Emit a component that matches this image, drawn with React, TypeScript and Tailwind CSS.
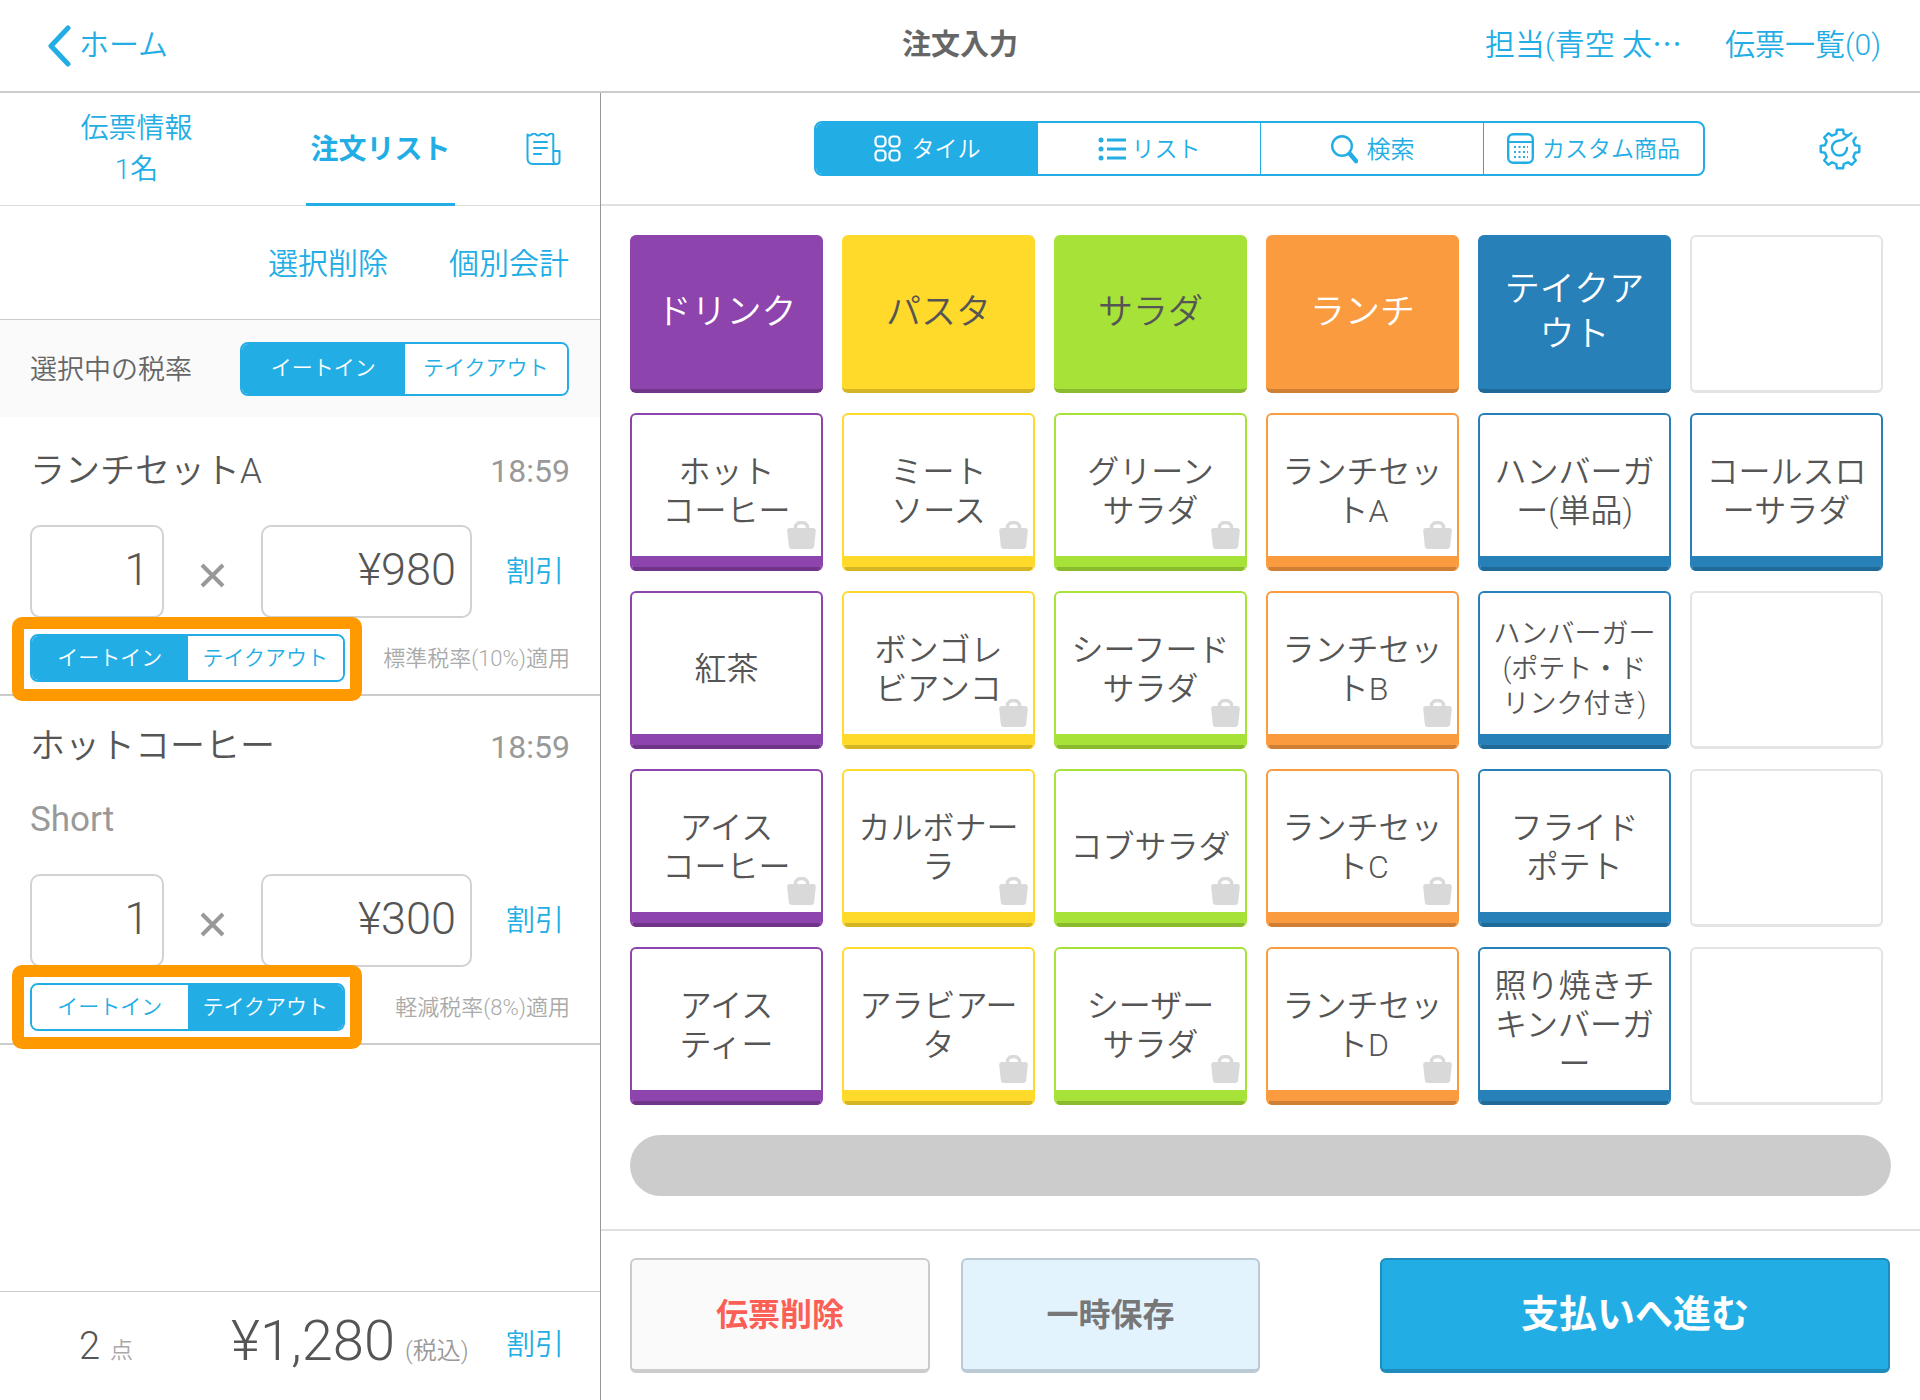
const palette = {
  purple: { solid: 'bg-[#8e44ad] border-b-[#703589] text-white', border: 'border-[#8e44ad]', band: 'bg-[#8e44ad] border-b-[#703589]' },
  yellow: { solid: 'bg-[#ffda2b] border-b-[#d6b525] text-[#555555]', border: 'border-[#ffda2b]', band: 'bg-[#ffda2b] border-b-[#d6b525]' },
  green: { solid: 'bg-[#a6e238] border-b-[#8abb2f] text-[#555555]', border: 'border-[#a6e238]', band: 'bg-[#a6e238] border-b-[#8abb2f]' },
  orange: { solid: 'bg-[#fb9b3f] border-b-[#d08035] text-white', border: 'border-[#fb9b3f]', band: 'bg-[#fb9b3f] border-b-[#d08035]' },
  blue: { solid: 'bg-[#2880b9] border-b-[#206a9a] text-white', border: 'border-[#2880b9]', band: 'bg-[#2880b9] border-b-[#206a9a]' },
}

type Color = keyof typeof palette

interface Tile {
  label?: string
  color?: Color
  bag?: boolean
  small?: boolean
  solid?: boolean
}

const tiles: Tile[] = [
  { label: 'ドリンク', color: 'purple', solid: true },
  { label: 'パスタ', color: 'yellow', solid: true },
  { label: 'サラダ', color: 'green', solid: true },
  { label: 'ランチ', color: 'orange', solid: true },
  { label: 'テイクア\nウト', color: 'blue', solid: true },
  {},
  { label: 'ホット\nコーヒー', color: 'purple', bag: true },
  { label: 'ミート\nソース', color: 'yellow', bag: true },
  { label: 'グリーン\nサラダ', color: 'green', bag: true },
  { label: 'ランチセッ\nトA', color: 'orange', bag: true },
  { label: 'ハンバーガ\nー(単品)', color: 'blue' },
  { label: 'コールスロ\nーサラダ', color: 'blue' },
  { label: '紅茶', color: 'purple' },
  { label: 'ボンゴレ\nビアンコ', color: 'yellow', bag: true },
  { label: 'シーフード\nサラダ', color: 'green', bag: true },
  { label: 'ランチセッ\nトB', color: 'orange', bag: true },
  { label: 'ハンバーガー\n(ポテト・ド\nリンク付き)', color: 'blue', small: true },
  {},
  { label: 'アイス\nコーヒー', color: 'purple', bag: true },
  { label: 'カルボナー\nラ', color: 'yellow', bag: true },
  { label: 'コブサラダ', color: 'green', bag: true },
  { label: 'ランチセッ\nトC', color: 'orange', bag: true },
  { label: 'フライド\nポテト', color: 'blue' },
  {},
  { label: 'アイス\nティー', color: 'purple' },
  { label: 'アラビアー\nタ', color: 'yellow', bag: true },
  { label: 'シーザー\nサラダ', color: 'green', bag: true },
  { label: 'ランチセッ\nトD', color: 'orange', bag: true },
  { label: '照り焼きチ\nキンバーガ\nー', color: 'blue' },
  {},
]

// outline of the cog, open at the upper right tooth
function cogPath() {
  const pt = (r: number, deg: number) => {
    const a = (deg * Math.PI) / 180
    return `${(22 + r * Math.cos(a)).toFixed(1)} ${(22 + r * Math.sin(a)).toFixed(1)}`
  }
  const parts: string[] = [`M${pt(19.5, -36)}`, `L${pt(15.5, -31)}`]
  for (let i = 1; i < 8; i++) {
    const a = -45 + i * 45
    parts.push(`L${pt(15.5, a - 14)}`, `L${pt(19.5, a - 9)}`, `L${pt(19.5, a + 9)}`, `L${pt(15.5, a + 14)}`)
  }
  parts.push(`L${pt(15.5, -59)}`, `L${pt(19.5, -54)}`)
  return parts.join(' ')
}

function CogIcon() {
  return (
    <svg width="44" height="44" viewBox="0 0 44 44" fill="none" stroke="#22aee5" strokeWidth="2.400" strokeLinecap="round" strokeLinejoin="round" className="ml-[113px]">
      <path d={cogPath()} />
      <path d="M29 21a7.500 7.500 0 1 1-7.500-7.500c3 0 6-2.500 8-4.500" />
    </svg>
  )
}

function BagIcon() {
  return (
    <svg width="29" height="28" viewBox="0 0 29 28" className="absolute right-[5px] bottom-[22px]">
      <path d="M8.500 9V6a6 4.500 0 0 1 12 0v3" fill="none" stroke="#d9d9d9" strokeWidth="3.500" />
      <path d="M3 7h23q3 0 2.800 3l-1.600 15q-.3 3-3.200 3H5q-2.900 0-3.200-3L.2 10Q0 7 3 7z" fill="#d9d9d9" />
    </svg>
  )
}

function TileCell({ tile }: { tile: Tile }) {
  if (!tile.color) {
    return <div className="h-[158px] rounded-[6px] border-2 border-b-[3px] border-[#e4e4e4] bg-white" />
  }
  const colors = palette[tile.color]
  if (tile.solid) {
    return (
      <div className={`flex h-[158px] items-center justify-center rounded-[6px] border-b-4 text-center text-[35px] leading-[45px] font-[350] whitespace-pre-line ${colors.solid}`}>
        {tile.label}
      </div>
    )
  }
  return (
    <div className={`relative flex h-[158px] flex-col overflow-hidden rounded-[6px] border-x-2 border-t-2 bg-white ${colors.border}`}>
      <div className={`flex flex-1 items-center justify-center pt-[12px] text-center font-[350] whitespace-pre-line text-[#555555] ${tile.small ? 'text-[27px] leading-[35px]' : 'text-[32px] leading-[39px]'}`}>
        {tile.label}
      </div>
      <div className={`h-[15px] border-b-4 ${colors.band}`} />
      {tile.bag && <BagIcon />}
    </div>
  )
}

function TaxToggle({ active, className }: { active: 'eat' | 'take'; className: string }) {
  return (
    <div className={`flex overflow-hidden rounded-[8px] border-2 border-[#22aee5] text-[21px] font-[350] ${className}`}>
      <div className={`flex w-1/2 flex-none items-center justify-center pt-[1px] ${active === 'eat' ? 'bg-[#22aee5] text-white' : 'bg-white text-[#22aee5]'}`}>イートイン</div>
      <div className={`flex w-1/2 flex-none items-center justify-center pt-[1px] ${active === 'take' ? 'bg-[#22aee5] text-white' : 'bg-white text-[#22aee5]'}`}>テイクアウト</div>
    </div>
  )
}

function OrderLine({ price, active, note, frameClass }: { price: string; active: 'eat' | 'take'; note: string; frameClass: string }) {
  return (
    <>
      <div className="flex h-[93px] items-start">
        <div className="flex h-[93px] w-[134px] items-start justify-end rounded-[10px] border-2 border-[#d2d2d2] pt-[19px] pr-[13px] text-[44px] leading-[48px] font-light text-[#555555]">1</div>
        <svg width="25" height="25" viewBox="0 0 25 25" className="mt-[38px] ml-[36px]">
          <path d="M2 2l21 21M23 2L2 23" stroke="#999999" strokeWidth="4" />
        </svg>
        <div className="ml-[36px] flex h-[93px] w-[211px] items-start justify-end rounded-[10px] border-2 border-[#d2d2d2] pt-[19px] pr-[14px] text-[45px] leading-[48px] font-light text-[#555555]">{price}</div>
        <div className="mt-[27px] ml-[34px] text-[29px] leading-[40px] font-[350] text-[#22aee5]">割引</div>
      </div>
      <div className="mt-[16px] flex h-[48px] items-center justify-between">
        <div className="relative">
          <TaxToggle active={active} className="h-[48px] w-[315px]" />
          <div className={`pointer-events-none absolute rounded-[10px] border-[12px] border-[#ff9900] ${frameClass}`} />
        </div>
        <div className="text-[22px] font-[350] text-[#aaaaaa]">{note}</div>
      </div>
    </>
  )
}

export default function App() {
  return (
    <div
      className="flex h-[1400px] w-[1920px] flex-col bg-white text-[#555555]"
      style={{ fontFamily: 'Roboto, "Noto Sans CJK JP", sans-serif' }}
    >
      <header className="relative flex h-[93px] items-center border-b-2 border-[#cccccc] pr-[39px] pl-[47px] text-[30px] font-[350] text-[#22aee5]">
        <svg width="24" height="42" viewBox="0 0 24 42">
          <path d="M21 3L4 21l17 18" fill="none" stroke="#22aee5" strokeWidth="5" strokeLinecap="round" strokeLinejoin="round" />
        </svg>
        <span className="mb-[2px] ml-[8px]">ホーム</span>
        <span className="absolute left-1/2 -translate-x-1/2 text-[29px] font-bold text-[#666666]">注文入力</span>
        <span className="mb-[2px] ml-auto">担当(青空 太⋯</span>
        <span className="mb-[2px] ml-[43px]">伝票一覧(0)</span>
      </header>

      <div className="flex flex-1">
        <aside className="flex w-[601px] flex-col border-r-[1.5px] border-[#999999]">
          <div className="flex h-[113px] border-b-[1.5px] border-[#dddddd] text-[#22aee5]">
            <div className="flex w-[273px] flex-col items-center justify-center text-[28px] leading-[41px] font-[350]">
              <span>伝票情報</span>
              <span>1名</span>
            </div>
            <div className="ml-[33px] flex h-[113px] w-[149px] items-center justify-center border-b-[3px] border-[#22aee5] pt-[3px] text-[28px] font-bold">注文リスト</div>
            <svg width="35" height="33" viewBox="0 0 35 33" className="mt-[40px] ml-[71px]" fill="none" stroke="#22aee5" strokeWidth="2" strokeLinecap="round" strokeLinejoin="round">
              <path d="M1.500 1.500q2.100 2 4.300 0t4.300 0 4.300 0 4.300 0 4.300 0 4.300 0V27q0 4 3 4H7q-5.500 0-5.500-5.500z" />
              <path d="M28 18h5.500v10q0 3-3 3" />
              <path d="M8 9h13M8 15h13M8 21h7" />
            </svg>
          </div>
          <div className="flex h-[114px] items-center justify-end gap-[61px] border-b-[1.5px] border-[#cccccc] pt-[1px] pr-[31px] text-[30px] font-[350] text-[#22aee5]">
            <span>選択削除</span>
            <span>個別会計</span>
          </div>
          <div className="flex h-[97px] items-center justify-between bg-[#fafafa] pr-[31px] pl-[30px]">
            <span className="pt-[3px] text-[27px] font-[350] text-[#666666]">選択中の税率</span>
            <TaxToggle active="eat" className="h-[54px] w-[329px]" />
          </div>

          <section className="border-b-2 border-[#cccccc] px-[30px] pb-[12px]">
            <div className="flex items-center justify-between pt-[33px] leading-[40px]">
              <span className="pt-[2px] text-[35px] font-[350]">ランチセットA</span>
              <span className="text-[32px] text-[#999999]">18:59</span>
            </div>
            <div className="mt-[33px]">
              <OrderLine price="¥980" active="eat" note="標準税率(10%)適用" frameClass="-top-[17px] -right-[17px] -bottom-[19px] -left-[18px]" />
            </div>
          </section>

          <section className="border-b-2 border-[#cccccc] px-[30px] pb-[12px]">
            <div className="flex items-center justify-between pt-[31px] leading-[40px]">
              <span className="text-[35px] font-[350]">ホットコーヒー</span>
              <span className="text-[32px] text-[#999999]">18:59</span>
            </div>
            <div className="mt-[33px] text-[35px] leading-[40px] text-[#999999]">Short</div>
            <div className="mt-[34px]">
              <OrderLine price="¥300" active="take" note="軽減税率(8%)適用" frameClass="-top-[18px] -right-[17px] -bottom-[18px] -left-[18px]" />
            </div>
          </section>

          <div className="flex-1" />

          <footer className="flex h-[109px] items-center border-t-[1.5px] border-[#cccccc] pr-[36px]">
            <span className="ml-[79px] text-[38px] font-light">2</span>
            <span className="mt-[10px] ml-[10px] text-[23px] font-[350] text-[#aaaaaa]">点</span>
            <span className="mb-[10px] ml-[98px] text-[56px] font-light">¥1,280</span>
            <span className="mt-[10px] ml-[10px] text-[24px] font-[350] text-[#999999]">(税込)</span>
            <span className="ml-auto text-[29px] font-[350] text-[#22aee5]">割引</span>
          </footer>
        </aside>

        <main className="flex flex-1 flex-col">
          <div className="flex h-[113px] items-center border-b-2 border-[#e0e0e0] pl-[213px]">
            <div className="flex h-[55px] w-[891px] overflow-hidden rounded-[8px] border-2 border-[#22aee5] text-[23px] font-[350] text-[#22aee5]">
              <div className="flex w-[222px] items-center justify-center gap-[11px] bg-[#22aee5] text-white">
                <svg width="27" height="27" viewBox="0 0 27 27" fill="none" stroke="white" strokeWidth="2.200">
                  <rect x="1.500" y="1.500" width="10" height="10" rx="3.500" />
                  <rect x="15.500" y="1.500" width="10" height="10" rx="3.500" />
                  <rect x="1.500" y="15.500" width="10" height="10" rx="3.500" />
                  <rect x="15.500" y="15.500" width="10" height="10" rx="3.500" />
                </svg>
                <span className="pt-[3px]">タイル</span>
              </div>
              <div className="flex w-[222px] items-center justify-center gap-[6px]">
                <svg width="28" height="24" viewBox="0 0 28 24" fill="#22aee5">
                  <circle cx="3" cy="3" r="2.500" />
                  <circle cx="3" cy="12" r="2.500" />
                  <circle cx="3" cy="21" r="2.500" />
                  <rect x="9" y="1.500" width="19" height="3" />
                  <rect x="9" y="10.500" width="19" height="3" />
                  <rect x="9" y="19.500" width="19" height="3" />
                </svg>
                <span className="pt-[3px]">リスト</span>
              </div>
              <div className="flex w-[223px] items-center justify-center gap-[9px] border-l-[1.5px] border-[#22aee5]">
                <svg width="28" height="30" viewBox="0 0 28 30" fill="none" stroke="#22aee5">
                  <circle cx="12" cy="12" r="9.800" strokeWidth="2.400" />
                  <path d="M20 20l6 7" strokeWidth="4.500" strokeLinecap="round" />
                </svg>
                <span className="pt-[3px] text-[24px]">検索</span>
              </div>
              <div className="flex flex-1 items-center justify-center gap-[8px] border-l-[1.5px] border-[#22aee5]">
                <svg width="27" height="31" viewBox="0 0 27 31" fill="none" stroke="#22aee5">
                  <rect x="1.200" y="1.200" width="24.600" height="28.600" rx="5" strokeWidth="2.400" />
                  <path d="M1.500 9h24" strokeWidth="2" />
                  <path d="M7 14h2M11.500 14h2M16 14h2M20 14h1M7 19h2M11.500 19h2M16 19h2M20 19h1M7 24h2M11.500 24h2M16 24h2M20 24h1" strokeWidth="2.200" />
                </svg>
                <span className="pt-[3px]">カスタム商品</span>
              </div>
            </div>
            <CogIcon />
          </div>

          <div className="flex flex-1 flex-col pt-[29px] pr-[29px] pl-[29px]">
            <div className="grid grid-cols-[repeat(6,193px)] gap-x-[19px] gap-y-[20px]">
              {tiles.map((tile, i) => (
                <TileCell key={i} tile={tile} />
              ))}
            </div>
            <div className="mt-[30px] h-[61px] rounded-full bg-[#cccccc]" />
          </div>

          <div className="flex h-[171px] items-start border-t-2 border-[#e0e0e0] pt-[27px] pr-[30px] pl-[29px]">
            <button className="h-[115px] w-[300px] rounded-[6px] border-2 border-b-4 border-[#cccccc] bg-[#fafafa] text-[32px] font-bold text-[#fb5f55]">伝票削除</button>
            <button className="ml-[31px] h-[115px] w-[299px] rounded-[6px] border-2 border-b-4 border-[#bccad6] bg-[#e3f3fd] text-[32px] font-bold text-[#777777]">一時保存</button>
            <button className="ml-auto h-[115px] w-[510px] rounded-[6px] border-2 border-b-4 border-[#1e8dbd] bg-[#22aee5] text-[38px] font-bold text-white">支払いへ進む</button>
          </div>
        </main>
      </div>
    </div>
  )
}
